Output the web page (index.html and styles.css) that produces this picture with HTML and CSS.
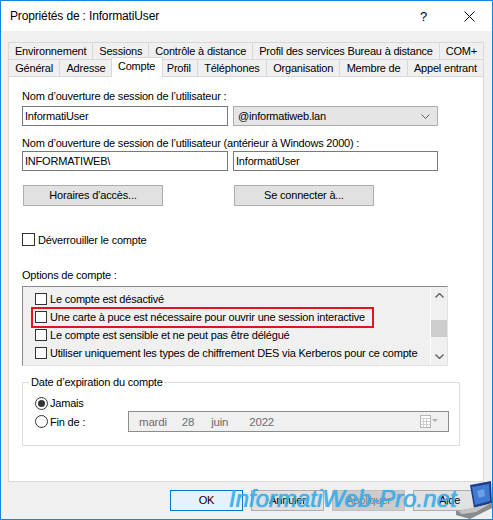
FILE: index.html
```html
<!DOCTYPE html>
<html>
<head>
    <meta charset="UTF-8">
    <title>Propriétés de : InformatiUser</title>
    <link rel="stylesheet" href="styles.css">
</head>
<body>
    <div class="window">
        <div class="titlebar">
            <span class="title">Propriétés de : InformatiUser</span>
            <span class="help">?</span>
            <svg class="close" width="11" height="11" viewBox="0 0 11 11">
                <path d="M0.5 0.5 L10.5 10.5 M10.5 0.5 L0.5 10.5" stroke="#000" stroke-width="1" fill="none"/>
            </svg>
        </div>

        <!-- Onglets sur deux rangées -->
        <div class="tabs">
            <div class="tab-row">
                <div class="tab">Environnement</div>
                <div class="tab">Sessions</div>
                <div class="tab">Contrôle à distance</div>
                <div class="tab">Profil des services Bureau à distance</div>
                <div class="tab">COM+</div>
            </div>
            <div class="tab-row">
                <div class="tab">Général</div>
                <div class="tab">Adresse</div>
                <div class="tab active">Compte</div>
                <div class="tab">Profil</div>
                <div class="tab">Téléphones</div>
                <div class="tab">Organisation</div>
                <div class="tab">Membre de</div>
                <div class="tab">Appel entrant</div>
            </div>
        </div>

        <div class="panel">
            <div class="label first">Nom d’ouverture de session de l’utilisateur :</div>
            <div class="field-row">
                <div class="text-input">InformatiUser</div>
                <div class="combo">
                    <span>@informatiweb.lan</span>
                    <svg width="9" height="5" viewBox="0 0 9 5">
                        <path d="M0.5 0.5 L4.5 4.5 L8.5 0.5" stroke="#606060" fill="none"/>
                    </svg>
                </div>
            </div>

            <div class="label second">Nom d’ouverture de session de l’utilisateur (antérieur à Windows 2000) :</div>
            <div class="field-row tight">
                <div class="text-input">INFORMATIWEB\</div>
                <div class="text-input wide">InformatiUser</div>
            </div>

            <div class="button-row">
                <div class="btn">Horaires d’accès...</div>
                <div class="btn">Se connecter à...</div>
            </div>

            <div class="check-row">
                <span class="checkbox"></span>
                <span>Déverrouiller le compte</span>
            </div>

            <div class="label options">Options de compte :</div>
            <div class="listbox">
                <div class="list-items">
                    <div class="list-item"><span class="checkbox small"></span>Le compte est désactivé</div>
                    <div class="list-item"><span class="checkbox small"></span>Une carte à puce est nécessaire pour ouvrir une session interactive</div>
                    <div class="list-item"><span class="checkbox small"></span>Le compte est sensible et ne peut pas être délégué</div>
                    <div class="list-item"><span class="checkbox small"></span>Utiliser uniquement les types de chiffrement DES via Kerberos pour ce compte</div>
                </div>
                <div class="scrollbar">
                    <div class="arrow">
                        <svg width="9" height="5" viewBox="0 0 9 5"><path d="M0.5 4.5 L4.5 0.5 L8.5 4.5" stroke="#606060" stroke-width="1.4" fill="none"/></svg>
                    </div>
                    <div class="track"><div class="thumb"></div></div>
                    <div class="arrow">
                        <svg width="9" height="5" viewBox="0 0 9 5"><path d="M0.5 0.5 L4.5 4.5 L8.5 0.5" stroke="#606060" stroke-width="1.4" fill="none"/></svg>
                    </div>
                </div>
                <div class="highlight"></div>
            </div>

            <fieldset class="group">
                <legend>Date d’expiration du compte</legend>
                <div class="radio-row">
                    <span class="radio checked"></span>
                    <span>Jamais</span>
                </div>
                <div class="radio-row date">
                    <span class="radio"></span>
                    <span class="radio-label">Fin de :</span>
                    <div class="datepicker">
                        <span class="d-day">mardi</span>
                        <span class="d-num">28</span>
                        <span class="d-month">juin</span>
                        <span>2022</span>
                        <svg class="calendar" width="19" height="13" viewBox="0 0 19 13">
                            <rect x="0.5" y="0.5" width="10" height="12" fill="#fff" stroke="#b5b5b5"/>
                            <path d="M0.5 3.5 H10.5 M0.5 6.5 H10.5 M0.5 9.5 H10.5 M3.5 3.5 V12.5 M6.5 3.5 V12.5" stroke="#d0d0d0"/>
                            <path d="M12 4 L18 4 L15 7 Z" fill="#b0b0b0"/>
                        </svg>
                    </div>
                </div>
            </fieldset>
        </div>

        <div class="actions">
            <div class="btn small default">OK</div>
            <div class="btn small">Annuler</div>
            <div class="btn small disabled">Appliquer</div>
            <div class="btn small">Aide</div>
        </div>

        <!-- Filigrane -->
        <div class="watermark">InformatiWeb-Pro.net</div>
        <svg class="laptop" width="36" height="38" viewBox="0 0 36 38">
            <polygon points="14,4 35,0 36,22 18,27" fill="#1c3f8c"/>
            <polygon points="16,6 33,3 34,20 19,24" fill="#3f7ad0"/>
            <polygon points="21,10 28,8 29,15 23,17" fill="#7fb3f0" opacity="0.7"/>
            <polygon points="0,30 18,27 36,22 36,27 14,38 0,34" fill="#8a8a8a"/>
            <polygon points="2,30 18,26.5 34,23 20,31 6,33" fill="#c4c4c4"/>
        </svg>
    </div>
</body>
</html>
```

FILE: styles.css
```css
* {
    box-sizing: border-box;
}

body {
    margin: 0;
    font-family: "Liberation Sans", Arial, sans-serif;
    font-size: 11px;
    letter-spacing: -0.2px;
    color: #000;
}

.window {
    position: relative;
    width: 493px;
    height: 520px;
    border: 1px solid #1883d7;
    background: #f0f0f0;
    overflow: hidden;
}

.titlebar {
    display: flex;
    align-items: center;
    height: 30px;
    padding-left: 9px;
    background: #fff;
}

.title {
    flex-grow: 1;
    font-size: 12px;
    letter-spacing: -0.15px;
}

.help {
    font-size: 13px;
    margin-right: 37px;
}

.close {
    margin-right: 17px;
}

/* Onglets */
.tabs {
    margin: 11px 8px 0 7px;
}

.tab-row {
    display: flex;
    height: 17px;
}

.tab {
    flex: 1 1 auto;
    text-align: center;
    line-height: 16px;
    border: 1px solid #d9d9d9;
    border-bottom: none;
    margin-left: -1px;
    padding: 0 4px;
    white-space: nowrap;
}

.tab:first-child {
    margin-left: 0;
}

.tab.active {
    position: relative;
    z-index: 1;
    height: 20px;
    margin: -2px -2px 0 -2px;
    background: #fff;
    line-height: 17px;
}

.panel {
    height: 406px;
    margin: 0 8px 0 7px;
    padding: 0 13px;
    background: #fff;
    border: 1px solid #d9d9d9;
}

.label {
    line-height: 13px;
    white-space: nowrap;
}

.label.first {
    margin-top: 13px;
}

.label.second {
    margin-top: 11px;
}

.label.options {
    margin-top: 23px;
}

.field-row {
    display: flex;
    gap: 5px;
    margin-top: 3px;
}

.field-row.tight {
    margin-top: 1px;
}

.text-input {
    width: 206px;
    height: 20px;
    line-height: 18px;
    padding-left: 2px;
    border: 1px solid #7a7a7a;
    background: #fff;
}

.text-input.wide {
    width: 205px;
}

.combo {
    display: flex;
    align-items: center;
    justify-content: space-between;
    width: 205px;
    height: 20px;
    padding: 0 7px 0 4px;
    border: 1px solid #adadad;
    background: #e5e5e5;
}

.btn {
    height: 21px;
    line-height: 19px;
    text-align: center;
    border: 1px solid #adadad;
    background: #e1e1e1;
}

.button-row {
    display: flex;
    gap: 71px;
    margin: 14px 0 0 1px;
}

.button-row .btn {
    width: 140px;
}

.check-row {
    display: flex;
    align-items: center;
    gap: 3px;
    height: 13px;
    margin-top: 27px;
}

.checkbox {
    width: 13px;
    height: 13px;
    border: 1px solid #333;
    background: #fff;
}

.checkbox.small {
    width: 12px;
    height: 12px;
}

/* Liste des options */
.listbox {
    position: relative;
    display: flex;
    width: 426px;
    height: 80px;
    margin-top: 4px;
    background: #f0f0f0;
    border: 1px solid #e3e3e3;
    border-top-color: #8a8a8a;
    border-left-color: #8a8a8a;
}

.list-items {
    flex-grow: 1;
    padding: 3px 0 0 12px;
    overflow: hidden;
}

.list-item {
    display: flex;
    align-items: center;
    gap: 3px;
    height: 18px;
    white-space: nowrap;
}

.scrollbar {
    display: flex;
    flex-direction: column;
    width: 17px;
    background: #f0f0f0;
    border-left: 1px solid #fff;
}

.arrow {
    display: flex;
    align-items: center;
    justify-content: center;
    height: 17px;
}

.track {
    flex-grow: 1;
}

.thumb {
    height: 17px;
    margin-top: 16px;
    background: #cdcdcd;
}

.highlight {
    position: absolute;
    left: 8px;
    top: 20px;
    width: 343px;
    height: 21px;
    border: 2px solid #e5141b;
}

/* Date d'expiration */
.group {
    width: 438px;
    margin: 10px 0 0 0;
    padding: 0 0 13px 6px;
    border: 1px solid #dcdcdc;
    min-width: 0;
}

.group legend {
    padding: 0 2px;
    line-height: 13px;
}

.radio-row {
    display: flex;
    align-items: center;
    gap: 2px;
    height: 16px;
    margin: 6px 0 0 6px;
}

.radio-row.date {
    height: 21px;
    margin-top: 0;
}

.radio-label {
    width: 76px;
}

.radio {
    display: flex;
    align-items: center;
    justify-content: center;
    width: 13px;
    height: 13px;
    border: 1px solid #333;
    border-radius: 50%;
    background: #fff;
}

.radio.checked::after {
    content: "";
    width: 7px;
    height: 7px;
    border-radius: 50%;
    background: #333;
}

.datepicker {
    display: flex;
    align-items: center;
    width: 321px;
    height: 21px;
    padding-left: 10px;
    border: 1px solid #8c8c8c;
    background: #f0f0f0;
    color: #6d6d6d;
    font-size: 11.5px;
}

.d-day {
    margin-right: 15px;
}

.d-num {
    margin-right: 17px;
}

.d-month {
    margin-right: 21px;
}

.calendar {
    margin-left: auto;
    margin-right: 9px;
}

/* Boutons du bas */
.actions {
    display: flex;
    justify-content: flex-end;
    gap: 8px;
    margin: 8px 6px 0 0;
}

.btn.small {
    width: 73px;
}

.btn.default {
    background: #e5f1fb;
    border-color: #0078d7;
}

.btn.disabled {
    background: #cccccc;
    border-color: #bfbfbf;
    color: #838383;
}

.watermark {
    position: absolute;
    left: 228px;
    top: 484px;
    font-size: 24px;
    font-style: italic;
    letter-spacing: 0;
    color: #33aff0;
    text-shadow: 0 0 1px #1a86d0;
    opacity: 0.9;
}

.laptop {
    position: absolute;
    right: 0;
    bottom: 0;
}
```
